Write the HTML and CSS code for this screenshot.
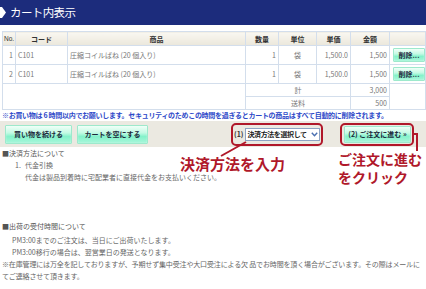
FILE: index.html
```html
<!DOCTYPE html>
<html lang="ja">
<head>
<meta charset="utf-8">
<title>カート内表示</title>
<link rel="stylesheet" href="styles.css">
</head>
<body>
<header class="title-bar">
  <svg class="chev" width="6" height="11" viewBox="0 0 6 11"><polygon points="0,0 2,0 6,5.5 2,11 0,11" fill="#fff"/></svg>
  <h1>カート内表示</h1>
</header>

<table class="cart">
  <colgroup>
    <col class="c-no"><col class="c-code"><col class="c-name"><col class="c-qty"><col class="c-unit"><col class="c-price"><col class="c-amt"><col class="c-del">
  </colgroup>
  <thead>
    <tr><th>No.</th><th>コード</th><th>商品</th><th>数量</th><th>単位</th><th>単価</th><th>金額</th><th></th></tr>
  </thead>
  <tbody>
    <tr class="item"><td class="num">1</td><td>C101</td><td>圧縮コイルばね (20 個入り)</td><td class="num">1</td><td class="ctr">袋</td><td class="num">1,500.0</td><td class="num">1,500</td><td class="ctr"><button class="btn del">削除...</button></td></tr>
    <tr class="item"><td class="num">2</td><td>C101</td><td>圧縮コイルばね (20 個入り)</td><td class="num">1</td><td class="ctr">袋</td><td class="num">1,500.0</td><td class="num">1,500</td><td class="ctr"><button class="btn del">削除...</button></td></tr>
    <tr class="sum"><td colspan="3" rowspan="2"></td><td colspan="3" class="ctr">計</td><td class="num">3,000</td><td rowspan="2"></td></tr>
    <tr class="sum"><td colspan="3" class="ctr">送料</td><td class="num">500</td></tr>
  </tbody>
</table>

<p class="notice">※お買い物は 6 時間以内でお願いします。セキュリティのためこの時間を過ぎるとカートの商品はすべて自動的に削除されます。</p>

<div class="actions">
  <button class="btn act">買い物を続ける</button>
  <button class="btn act">カートを空にする</button>
  <div class="mark pay">
    <span class="step">(1)</span>
    <span class="select"><span class="sel-text">決済方法を選択して</span><svg class="caret" width="7" height="5" viewBox="0 0 7 5"><path d="M0.8 0.8 L3.5 3.8 L6.2 0.8" fill="none" stroke="#4a6fb0" stroke-width="1.4"/></svg></span>
  </div>
  <div class="mark go">
    <button class="btn next">(2) ご注文に進む &raquo;</button>
  </div>
</div>

<section class="info pay-info">
  <h2>■決済方法について</h2>
  <ol>
    <li><span class="li-no">1.</span><div><p>代金引換</p><p>代金は製品到着時に宅配業者に直接代金をお支払いください。</p></div></li>
  </ol>
</section>

<section class="info ship-info">
  <h2>■出荷の受付時間について</h2>
  <p class="ind">PM3:00までのご注文は、当日にご出荷いたします。</p>
  <p class="ind">PM3:00移行の場合は、翌営業日の発送となります。</p>
  <p class="long"><span class="nw">※在庫管理には万全を記しておりますが、予期せず集中受注や大口受注による欠 品でお時間を頂く場合がございます。その際はメールに</span><br>てご連絡させて頂きます。</p>
</section>

<div class="notes">
  <svg class="lines" width="426" height="289" viewBox="0 0 426 289">
    <path d="M246 142 L221 156" stroke="#b0182a" stroke-width="2" fill="none"/>
    <path d="M413 134 H417 V151" stroke="#b0182a" stroke-width="2" fill="none"/>
  </svg>
  <p class="note n1">決済方法を入力</p>
  <p class="note n2">ご注文に進む<br>をクリック</p>
</div>
</body>
</html>
```

FILE: styles.css
```css
* { box-sizing: border-box; margin: 0; padding: 0; }

body {
  width: 426px;
  height: 289px;
  overflow: hidden;
  position: relative;
  background: #fff;
  font-family: "Noto Sans CJK JP", "DejaVu Sans", sans-serif;
  font-size: 7px;
  line-height: 12px;
  color: #666;
}

.title-bar {
  height: 25px;
  background: #1c2c7c;
  display: flex;
  align-items: center;
  gap: 4px;
  margin-bottom: 6px;
}
.title-bar h1 {
  color: #fff;
  font-size: 11.5px;
  font-weight: normal;
  letter-spacing: -0.6px;
  line-height: 25px;
}

.cart {
  margin-left: 2px;
  width: 423px;
  table-layout: fixed;
  border-collapse: collapse;
}
.c-no { width: 13px; }
.c-code { width: 52px; }
.c-name { width: 178px; }
.c-qty { width: 33px; }
.c-unit { width: 38px; }
.c-price { width: 34px; }
.c-amt { width: 39px; }
.c-del { width: 36px; }

.cart th, .cart td {
  border: 1px solid #d3deec;
  padding: 0 2px;
  white-space: nowrap;
  overflow: hidden;
  vertical-align: middle;
}
.cart th {
  height: 14px;
  background: linear-gradient(#f9f7f1, #ebe7db);
  color: #333;
  font-weight: bold;
}
.cart th:first-child { padding: 0 1px; font-weight: normal; font-family: "Liberation Sans", sans-serif; font-size: 6.5px; }
.cart td { color: #777; }
.cart tr.item td { height: 19px; }
.cart tr.sum td { height: 12px; }
.num { text-align: right; }
.ctr { text-align: center; }

.btn {
  font: inherit;
  font-weight: bold;
  color: #1c2a3c;
  border: 1px solid #9de9cc;
  border-radius: 1px;
  background: linear-gradient(#effff8 0%, #c4fae4 40%, #84f2ca 62%, #a8f6da 100%);
  box-shadow: inset 0 0 1px #fff;
  cursor: pointer;
  white-space: nowrap;
}
.btn.del {
  width: 32px;
  height: 14px;
  line-height: 11px;
  display: block;
  margin-left: 1px;
}

.notice {
  margin-left: 2px;
  color: #2d48c8;
  font-weight: bold;
  line-height: 11px;
  letter-spacing: -0.3px;
  white-space: nowrap;
}

.actions {
  height: 26px;
  background: #ebe9e1;
  display: flex;
  align-items: center;
  gap: 5px;
  padding: 0 12px 0 5px;
}
.btn.act {
  height: 19px;
  line-height: 16px;
}
.actions .btn.act:nth-child(1) { width: 67px; }
.actions .btn.act:nth-child(2) { width: 71px; }

.mark {
  height: 23px;
  border: 2px solid #b0182a;
  border-radius: 5px;
  display: flex;
  align-items: center;
}
.pay {
  margin-left: auto;
  width: 92px;
  padding-left: 1px;
  gap: 2px;
}
.step { color: #333; font-weight: bold; }
.select {
  width: 75px;
  height: 13px;
  border: 1px solid #8ea4c4;
  background: #fff;
  color: #222;
  font-weight: bold;
  display: flex;
  align-items: center;
  justify-content: space-between;
  padding: 0 1px 0 1px;
  line-height: 11px;
  white-space: nowrap;
}
.sel-text { letter-spacing: -0.4px; }
.go {
  margin-left: 12px;
  width: 74px;
  padding-left: 2px;
}
.btn.next {
  width: 67px;
  height: 17px;
  line-height: 14px;
}

.info { margin-left: 2px; }
.info h2 { font-size: 7px; font-weight: normal; color: #555; line-height: 12px; }
.pay-info ol { list-style: none; }
.pay-info li { display: flex; padding-left: 13px; }
.pay-info .li-no { width: 10px; }
.ship-info { margin-top: 37px; }
.ship-info h2 { margin-bottom: 2px; }
.ship-info .ind { padding-left: 10px; }
.long { letter-spacing: -0.15px; }
.nw { white-space: nowrap; }

.notes { position: absolute; inset: 0; pointer-events: none; }
.lines { position: absolute; left: 0; top: 0; }
.note {
  position: absolute;
  color: #b0182a;
  font-size: 15px;
  font-weight: bold;
  line-height: 16px;
  white-space: nowrap;
}
.n1 { left: 180px; top: 156px; }
.n2 { left: 338px; top: 150px; font-size: 14px; line-height: 18px; letter-spacing: 0; }
```
